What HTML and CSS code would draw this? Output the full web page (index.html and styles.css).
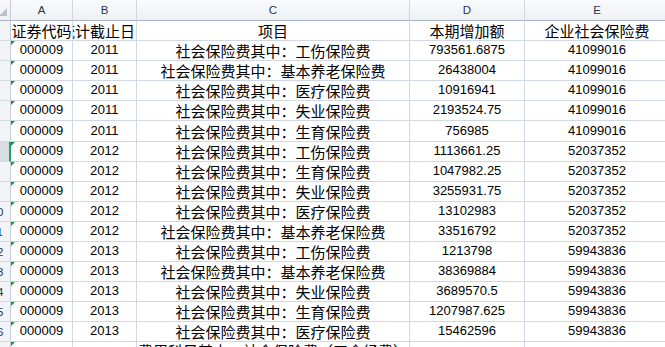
FILE: index.html
```html
<!DOCTYPE html>
<html lang="zh-CN">
<head>
<meta charset="utf-8">
<title>Sheet</title>
<link rel="stylesheet" href="styles.css">
</head>
<body>
<div class="sheet">
  <div class="corner"><span class="tri"></span></div>
  <div class="colhead">A</div>
  <div class="colhead">B</div>
  <div class="colhead">C</div>
  <div class="colhead">D</div>
  <div class="colhead">E</div>

  <div class="rowhead">1</div>
  <div class="cell cjk"><span>证券代码</span></div>
  <div class="cell cjk end"><span>统计截止日</span></div>
  <div class="cell cjk"><span>项目</span></div>
  <div class="cell cjk"><span>本期增加额</span></div>
  <div class="cell cjk"><span>企业社会保险费</span></div>

  <div class="rowhead">2</div>
  <div class="cell txt"><span>000009</span></div><div class="cell"><span>2011</span></div>
  <div class="cell cjk"><span>社会保险费其中：工伤保险费</span></div>
  <div class="cell"><span>793561.6875</span></div><div class="cell"><span>41099016</span></div>

  <div class="rowhead">3</div>
  <div class="cell txt"><span>000009</span></div><div class="cell"><span>2011</span></div>
  <div class="cell cjk"><span>社会保险费其中：基本养老保险费</span></div>
  <div class="cell"><span>26438004</span></div><div class="cell"><span>41099016</span></div>

  <div class="rowhead">4</div>
  <div class="cell txt"><span>000009</span></div><div class="cell"><span>2011</span></div>
  <div class="cell cjk"><span>社会保险费其中：医疗保险费</span></div>
  <div class="cell"><span>10916941</span></div><div class="cell"><span>41099016</span></div>

  <div class="rowhead">5</div>
  <div class="cell txt"><span>000009</span></div><div class="cell"><span>2011</span></div>
  <div class="cell cjk"><span>社会保险费其中：失业保险费</span></div>
  <div class="cell"><span>2193524.75</span></div><div class="cell"><span>41099016</span></div>

  <div class="rowhead">6</div>
  <div class="cell txt"><span>000009</span></div><div class="cell"><span>2011</span></div>
  <div class="cell cjk"><span>社会保险费其中：生育保险费</span></div>
  <div class="cell"><span>756985</span></div><div class="cell"><span>41099016</span></div>

  <div class="rowhead selected">7</div>
  <div class="cell txt"><span>000009</span></div><div class="cell"><span>2012</span></div>
  <div class="cell cjk"><span>社会保险费其中：工伤保险费</span></div>
  <div class="cell"><span>1113661.25</span></div><div class="cell"><span>52037352</span></div>

  <div class="rowhead">8</div>
  <div class="cell txt"><span>000009</span></div><div class="cell"><span>2012</span></div>
  <div class="cell cjk"><span>社会保险费其中：生育保险费</span></div>
  <div class="cell"><span>1047982.25</span></div><div class="cell"><span>52037352</span></div>

  <div class="rowhead">9</div>
  <div class="cell txt"><span>000009</span></div><div class="cell"><span>2012</span></div>
  <div class="cell cjk"><span>社会保险费其中：失业保险费</span></div>
  <div class="cell"><span>3255931.75</span></div><div class="cell"><span>52037352</span></div>

  <div class="rowhead">10</div>
  <div class="cell txt"><span>000009</span></div><div class="cell"><span>2012</span></div>
  <div class="cell cjk"><span>社会保险费其中：医疗保险费</span></div>
  <div class="cell"><span>13102983</span></div><div class="cell"><span>52037352</span></div>

  <div class="rowhead">11</div>
  <div class="cell txt"><span>000009</span></div><div class="cell"><span>2012</span></div>
  <div class="cell cjk"><span>社会保险费其中：基本养老保险费</span></div>
  <div class="cell"><span>33516792</span></div><div class="cell"><span>52037352</span></div>

  <div class="rowhead">12</div>
  <div class="cell txt"><span>000009</span></div><div class="cell"><span>2013</span></div>
  <div class="cell cjk"><span>社会保险费其中：工伤保险费</span></div>
  <div class="cell"><span>1213798</span></div><div class="cell"><span>59943836</span></div>

  <div class="rowhead">13</div>
  <div class="cell txt"><span>000009</span></div><div class="cell"><span>2013</span></div>
  <div class="cell cjk"><span>社会保险费其中：基本养老保险费</span></div>
  <div class="cell"><span>38369884</span></div><div class="cell"><span>59943836</span></div>

  <div class="rowhead">14</div>
  <div class="cell txt"><span>000009</span></div><div class="cell"><span>2013</span></div>
  <div class="cell cjk"><span>社会保险费其中：失业保险费</span></div>
  <div class="cell"><span>3689570.5</span></div><div class="cell"><span>59943836</span></div>

  <div class="rowhead">15</div>
  <div class="cell txt"><span>000009</span></div><div class="cell"><span>2013</span></div>
  <div class="cell cjk"><span>社会保险费其中：生育保险费</span></div>
  <div class="cell"><span>1207987.625</span></div><div class="cell"><span>59943836</span></div>

  <div class="rowhead">16</div>
  <div class="cell txt"><span>000009</span></div><div class="cell"><span>2013</span></div>
  <div class="cell cjk"><span>社会保险费其中：医疗保险费</span></div>
  <div class="cell"><span>15462596</span></div><div class="cell"><span>59943836</span></div>

  <div class="rowhead">17</div>
  <div class="cell txt"></div><div class="cell"></div>
  <div class="cell cjk top"><span>利润表费用科目其中：社会保险费（工会经费）合计数</span></div>
  <div class="cell"></div><div class="cell"></div>
</div>
</body>
</html>
```

FILE: styles.css
```css
html, body {
  margin: 0;
  padding: 0;
  background: #ffffff;
  overflow: hidden;
}

.sheet {
  display: grid;
  grid-template-columns: 27px 62px 64px 273px 115px 145px;
  grid-template-rows: 21px repeat(5, 20px) 21px repeat(10, 20px) 20px;
  margin-left: -16px;
  width: max-content;
  font-family: "Liberation Sans", "Noto Sans CJK SC", sans-serif;
  color: #000;
}

.corner {
  position: relative;
  background: linear-gradient(#f8f9fb, #eef1f5);
  border-right: 1px solid #c6ccd6;
  border-bottom: 1px solid #a9b5c7;
}

.corner .tri {
  position: absolute;
  right: 3px;
  bottom: 4px;
  width: 0;
  height: 0;
  border-left: 8px solid transparent;
  border-bottom: 8px solid #b9c0ca;
}

.colhead {
  background: linear-gradient(#f9fafb, #eef1f4);
  border-right: 1px solid #d3d8e0;
  border-bottom: 1px solid #a9b5c7;
  display: flex;
  align-items: center;
  justify-content: center;
  font-size: 11.5px;
  color: #27354f;
  font-family: "Liberation Sans", sans-serif;
}

.rowhead {
  background: #f3f4f7;
  border-right: 1px solid #c6ccd6;
  border-bottom: 1px solid #d6dbe3;
  display: flex;
  align-items: center;
  justify-content: center;
  font-size: 11.5px;
  color: #27354f;
}

.rowhead.selected {
  background: #d8dce3;
  border-right: 2px solid #21a366;
}

.cell {
  position: relative;
  overflow: hidden;
  display: flex;
  justify-content: center;
  align-items: flex-end;
  border-right: 1px solid #d0d7e5;
  border-bottom: 1px solid #d0d7e5;
  font-size: 13px;
  line-height: 16px;
  padding-bottom: 2px;
  white-space: nowrap;
}

.cell span {
  flex: none;
}

.cell.cjk {
  font-family: "Noto Sans CJK SC", sans-serif;
  font-size: 15px;
  line-height: 18px;
  padding-bottom: 0;
}

.cell.end {
  justify-content: flex-end;
  padding-right: 1px;
}

.cell.top {
  align-items: flex-start;
  padding-top: 0;
  line-height: 17px;
}

.cell.txt::before {
  content: "";
  position: absolute;
  top: 0;
  left: 0;
  width: 0;
  height: 0;
  border-top: 4px solid #1e8a3a;
  border-right: 4px solid transparent;
}
```
